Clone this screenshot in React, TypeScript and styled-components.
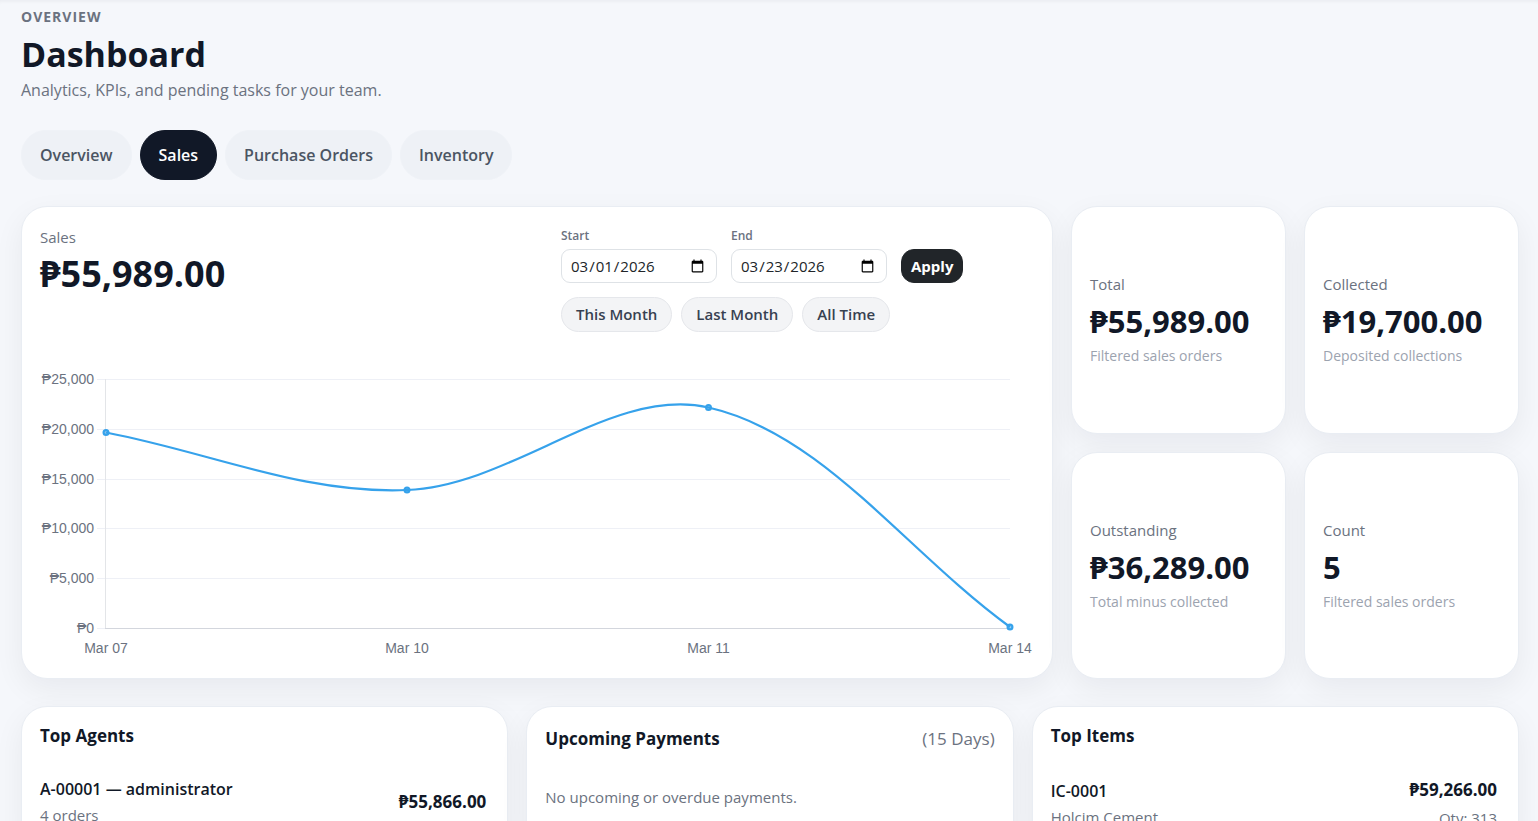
import React from "react";
import styled, { createGlobalStyle } from "styled-components";

const GlobalStyle = createGlobalStyle`
  * { box-sizing: border-box; }
  body {
    margin: 0;
    background: #f5f7fb;
    color: #111827;
    font-family: "Segoe UI", "Open Sans", "Noto Sans", sans-serif;
    font-size: 16px;
    overflow: hidden;
  }
  button, input { font-family: inherit; }
  h1, h2, p, ul { margin: 0; padding: 0; }
`;

const Page = styled.main`
  padding: 8px 19px 0 21px;
  box-shadow: inset 0 4px 4px -3px rgba(15, 23, 42, 0.06);
`;

const Eyebrow = styled.p`
  font-size: 14px;
  line-height: 18px;
  font-weight: 700;
  letter-spacing: 1px;
  color: #6b7280;
`;

const Title = styled.h1`
  margin-top: 8px;
  font-size: 34px;
  line-height: 40px;
  font-weight: 700;
`;

const Subtitle = styled.p`
  margin-top: 4px;
  font-size: 16px;
  line-height: 24px;
  color: #6b7280;
`;

const Tabs = styled.nav`
  display: flex;
  gap: 8px;
  margin: 28px 0 26px;
`;

const Tab = styled.button<{ $active?: boolean }>`
  height: 50px;
  padding: 0 18px;
  border: 1px solid ${(p) => (p.$active ? "#111827" : "#eff2f7")};
  border-radius: 25px;
  background: ${(p) => (p.$active ? "#111827" : "#eef1f6")};
  color: ${(p) => (p.$active ? "#ffffff" : "#4b5563")};
  font-size: 16px;
  font-weight: 600;
`;

const Card = styled.section`
  border: 1px solid #e9edf3;
  border-radius: 26px;
  background: #ffffff;
  box-shadow: 0 10px 30px rgba(15, 23, 42, 0.06);
  padding: 17px 18px 18px;
  min-width: 0;
`;

const TopGrid = styled.div`
  display: grid;
  grid-template-columns: minmax(0, 1fr) 448px;
  gap: 18px;
`;

const KpiGrid = styled.div`
  display: grid;
  grid-template-columns: 1fr 1fr;
  grid-auto-rows: 1fr;
  gap: 18px;
`;

const KpiCard = styled(Card)`
  display: flex;
  flex-direction: column;
  justify-content: center;
`;

const Label = styled.p`
  font-size: 15px;
  line-height: 26px;
  color: #6b7280;
`;

const KpiValue = styled.p`
  margin: 6px 0;
  font-size: 31px;
  line-height: 36px;
  font-weight: 700;
`;

const Hint = styled.p`
  font-size: 14px;
  line-height: 22px;
  color: #9ca3af;
`;

const SalesHeader = styled.header`
  display: grid;
  grid-template-columns: 521px 1fr;
`;

const SalesValue = styled.p`
  margin-top: 2px;
  font-size: 36px;
  line-height: 44px;
  font-weight: 700;
`;

const Filters = styled.form`
  display: grid;
  gap: 14px;
`;

const FilterRow = styled.div`
  display: flex;
  align-items: flex-end;
  gap: 14px;
`;

const PresetRow = styled.div`
  display: flex;
  gap: 9px;
`;

const Field = styled.label`
  display: grid;
  gap: 4px;
  padding-top: 3px;
  font-size: 12px;
  line-height: 18px;
  font-weight: 600;
  color: #6b7280;
`;

const DateInput = styled.input`
  width: 156px;
  height: 34px;
  padding: 0 9px 0 8px;
  border: 1px solid #dee2e6;
  border-radius: 9px;
  background: #ffffff;
  color: #212529;
  font-size: 15px;
`;

const Apply = styled.button`
  height: 34px;
  padding: 0 9px;
  border: 1px solid #212529;
  border-radius: 13px;
  background: #212529;
  color: #ffffff;
  font-size: 15px;
  font-weight: 700;
`;

const Preset = styled.button`
  height: 35px;
  padding: 0 14px 1px;
  border: 1px solid #e5e7eb;
  border-radius: 18px;
  background: #f3f4f6;
  color: #374151;
  font-size: 15px;
  font-weight: 600;
`;

const ChartSvg = styled.svg`
  display: block;
  width: 100%;
  height: auto;
  margin-top: 32px;
  text {
    font-family: "Liberation Sans", Arial, sans-serif;
    font-size: 14px;
    fill: #6b7280;
  }
`;

const BottomGrid = styled.div`
  display: grid;
  grid-template-columns: repeat(3, minmax(0, 1fr));
  gap: 18px;
  margin-top: 27px;
`;

const PanelHead = styled.header<{ $tall?: boolean }>`
  display: flex;
  align-items: center;
  justify-content: space-between;
  height: ${(p) => (p.$tall ? 30 : 24)}px;
`;

const PanelTitle = styled.h2`
  font-size: 17px;
  line-height: 24px;
  font-weight: 700;
`;

const PanelNote = styled.span`
  font-size: 17px;
  line-height: 24px;
  color: #6b7280;
`;

const Rows = styled.ul`
  list-style: none;
  && { padding-right: 3px; }
`;

const Row = styled.li`
  display: flex;
  align-items: center;
  justify-content: space-between;
  margin-top: 28px;
`;

const RowName = styled.p`
  font-size: 16px;
  line-height: 26px;
  font-weight: 600;
`;

const RowAmount = styled.p`
  font-size: 17px;
  line-height: 28px;
  font-weight: 700;
  text-align: right;
`;

const RowSub = styled.p`
  font-size: 15px;
  line-height: 26px;
  color: #6b7280;
`;

const RowQty = styled(RowSub)`
  line-height: 28px;
  text-align: right;
`;

const Empty = styled.p`
  margin-top: 31px;
  font-size: 15px;
  line-height: 24px;
  color: #6b7280;
`;

const tabs = ["Overview", "Sales", "Purchase Orders", "Inventory"];

const kpis = [
  { label: "Total", value: "₱55,989.00", hint: "Filtered sales orders" },
  { label: "Collected", value: "₱19,700.00", hint: "Deposited collections" },
  { label: "Outstanding", value: "₱36,289.00", hint: "Total minus collected" },
  { label: "Count", value: "5", hint: "Filtered sales orders" },
];

type Point = { x: number; y: number; label: string };

const points: Point[] = [
  { x: 66, y: 68.5, label: "Mar 07" },
  { x: 367, y: 126, label: "Mar 10" },
  { x: 668.5, y: 43.5, label: "Mar 11" },
  { x: 970, y: 263, label: "Mar 14" },
];

const ticks = ["₱25,000", "₱20,000", "₱15,000", "₱10,000", "₱5,000", "₱0"];

// Smooth path through the points; each control point is weighted by the
// distance to its neighbours.
function smoothPath(pts: Point[], tension: number) {
  const handles = pts.map((p, i) => {
    const a = pts[i - 1] ?? p;
    const b = pts[i + 1] ?? p;
    const da = Math.hypot(p.x - a.x, p.y - a.y);
    const db = Math.hypot(b.x - p.x, b.y - p.y);
    const fa = (tension * da) / (da + db);
    const fb = (tension * db) / (da + db);
    const dx = b.x - a.x;
    const dy = b.y - a.y;
    return { ax: p.x - fa * dx, ay: p.y - fa * dy, bx: p.x + fb * dx, by: p.y + fb * dy };
  });
  return pts.reduce((d, p, i) => {
    if (i === 0) return `M${p.x} ${p.y}`;
    const h0 = handles[i - 1];
    const h1 = handles[i];
    return `${d} C${h0.bx} ${h0.by} ${h1.ax} ${h1.ay} ${p.x} ${p.y}`;
  }, "");
}

function SalesChart() {
  return (
    <ChartSvg viewBox="0 0 994 296" role="img" aria-label="Sales by day">
      {ticks.map((t, i) => {
        const y = Math.round(15 + i * 49.8) + 0.5;
        return (
          <g key={t}>
            <line x1="57" x2="970" y1={y} y2={y} stroke="#eef0f6" />
            <text x="54" y={y + 4.5} textAnchor="end">{t}</text>
          </g>
        );
      })}
      <line x1="65.5" x2="65.5" y1="15" y2="265" stroke="#e3e5e8" />
      <line x1="65" x2="970" y1="264.5" y2="264.5" stroke="#d3d6dd" />
      <path d={smoothPath(points, 0.35)} fill="none" stroke="#36a2eb" strokeWidth="2.2" />
      {points.map((p) => (
        <g key={p.label}>
          <circle cx={p.x} cy={p.y} r="2.4" fill="#36a2eb" fillOpacity="0.5" stroke="#36a2eb" strokeWidth="2.2" />
          <text x={p.x} y="289" textAnchor="middle">{p.label}</text>
        </g>
      ))}
    </ChartSvg>
  );
}

export default function App() {
  return (
    <>
      <GlobalStyle />
      <Page>
        <Eyebrow>OVERVIEW</Eyebrow>
        <Title>Dashboard</Title>
        <Subtitle>Analytics, KPIs, and pending tasks for your team.</Subtitle>
        <Tabs>
          {tabs.map((t) => (
            <Tab key={t} type="button" $active={t === "Sales"}>{t}</Tab>
          ))}
        </Tabs>
        <TopGrid>
          <Card>
            <SalesHeader>
              <div>
                <Label>Sales</Label>
                <SalesValue>₱55,989.00</SalesValue>
              </div>
              <Filters onSubmit={(e) => e.preventDefault()}>
                <FilterRow>
                  <Field>
                    Start
                    <DateInput type="date" defaultValue="2026-03-01" />
                  </Field>
                  <Field>
                    End
                    <DateInput type="date" defaultValue="2026-03-23" />
                  </Field>
                  <Apply type="submit">Apply</Apply>
                </FilterRow>
                <PresetRow>
                  <Preset type="button">This Month</Preset>
                  <Preset type="button">Last Month</Preset>
                  <Preset type="button">All Time</Preset>
                </PresetRow>
              </Filters>
            </SalesHeader>
            <SalesChart />
          </Card>
          <KpiGrid>
            {kpis.map((k) => (
              <KpiCard key={k.label}>
                <Label>{k.label}</Label>
                <KpiValue>{k.value}</KpiValue>
                <Hint>{k.hint}</Hint>
              </KpiCard>
            ))}
          </KpiGrid>
        </TopGrid>
        <BottomGrid>
          <Card>
            <PanelHead>
              <PanelTitle>Top Agents</PanelTitle>
            </PanelHead>
            <Rows>
              <Row>
                <div>
                  <RowName>A-00001 — administrator</RowName>
                  <RowSub>4 orders</RowSub>
                </div>
                <RowAmount>₱55,866.00</RowAmount>
              </Row>
            </Rows>
          </Card>
          <Card>
            <PanelHead $tall>
              <PanelTitle>Upcoming Payments</PanelTitle>
              <PanelNote>(15 Days)</PanelNote>
            </PanelHead>
            <Empty>No upcoming or overdue payments.</Empty>
          </Card>
          <Card>
            <PanelHead>
              <PanelTitle>Top Items</PanelTitle>
            </PanelHead>
            <Rows>
              <Row>
                <div>
                  <RowName>IC-0001</RowName>
                  <RowSub>Holcim Cement</RowSub>
                </div>
                <div>
                  <RowAmount>₱59,266.00</RowAmount>
                  <RowQty>Qty: 313</RowQty>
                </div>
              </Row>
            </Rows>
          </Card>
        </BottomGrid>
      </Page>
    </>
  );
}
